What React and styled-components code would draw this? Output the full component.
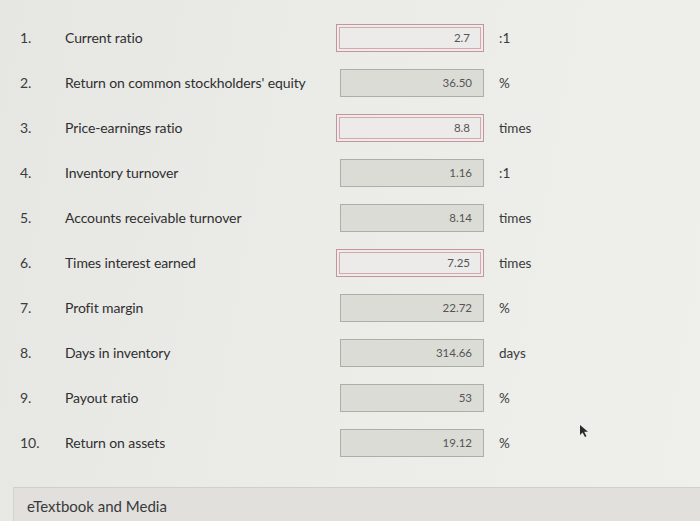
import React from 'react';
import styled, { createGlobalStyle } from 'styled-components';

const GlobalStyle = createGlobalStyle`
  html, body {
    margin: 0;
    padding: 0;
    background: #eaeae7;
    font-family: Lato, "Open Sans", sans-serif;
    color: #333;
  }
`;

const Page = styled.div`
  position: relative;
  width: 700px;
  height: 521px;
  overflow: hidden;
  background: linear-gradient(100deg, #e6e6e3 0%, #ebebe8 45%, #efefec 100%);
  display: flex;
  flex-direction: column;
`;

const List = styled.div`
  padding: 15px 0 0 20px;
  display: flex;
  flex-direction: column;
`;

const Row = styled.div`
  display: grid;
  grid-template-columns: 45px 271px 148px auto;
  align-items: center;
  height: 45px;
`;

const Num = styled.span`
  font-size: 14px;
  color: #3c3c3c;
`;

const Label = styled.span`
  font-size: 14px;
  color: #2f2f2f;
  letter-spacing: -0.1px;
`;

const Box = styled.div`
  box-sizing: border-box;
  height: 28px;
  display: flex;
  align-items: center;
  justify-content: flex-end;
  padding-right: 11px;
  font-size: 11.5px;
  color: #555;
  ${(p) =>
    p.$error
      ? `
    background: #ecebe9;
    border: 1px solid #c4959b;
    box-shadow: inset 0 0 0 2px #eeecea, inset 0 0 0 3px #d0aab0;
    padding-right: 13px;
  `
      : `
    background: #dcdcd7;
    border: 1px solid #aeaea9;
    margin-left: 4px;
  `}
`;

const Unit = styled.span`
  font-size: 13.5px;
  color: #3a3a3a;
  padding-left: 15px;
`;

const Footer = styled.div`
  margin: auto 0 0 13px;
  height: 31px;
  border-top: 1px solid #cfcfcb;
  border-left: 1px solid #d2d2ce;
  background: #e1e0dd;
  display: flex;
  align-items: center;
  padding-left: 13px;
  padding-top: 2px;
  font-size: 15px;
  color: #3a3a3a;
`;

const Cursor = styled.svg`
  position: absolute;
  left: 579px;
  top: 424px;
  width: 12px;
  height: 14px;
`;

const rows = [
  { n: '1.', label: 'Current ratio', value: '2.7', unit: ':1', error: true },
  { n: '2.', label: "Return on common stockholders' equity", value: '36.50', unit: '%' },
  { n: '3.', label: 'Price-earnings ratio', value: '8.8', unit: 'times', error: true },
  { n: '4.', label: 'Inventory turnover', value: '1.16', unit: ':1' },
  { n: '5.', label: 'Accounts receivable turnover', value: '8.14', unit: 'times' },
  { n: '6.', label: 'Times interest earned', value: '7.25', unit: 'times', error: true },
  { n: '7.', label: 'Profit margin', value: '22.72', unit: '%' },
  { n: '8.', label: 'Days in inventory', value: '314.66', unit: 'days' },
  { n: '9.', label: 'Payout ratio', value: '53', unit: '%' },
  { n: '10.', label: 'Return on assets', value: '19.12', unit: '%' },
];

export default function App() {
  return (
    <>
      <GlobalStyle />
      <Page>
        <List>
          {rows.map((r) => (
            <Row key={r.n}>
              <Num>{r.n}</Num>
              <Label>{r.label}</Label>
              <Box $error={r.error}>{r.value}</Box>
              <Unit>{r.unit}</Unit>
            </Row>
          ))}
        </List>
        <Footer>eTextbook and Media</Footer>
        <Cursor viewBox="0 0 12 14">
          <path d="M1 1 L1 11 L3.5 8.5 L6 13 L7.5 12.2 L5.2 7.8 L9 7.8 Z" fill="#2a2a2a" />
        </Cursor>
      </Page>
    </>
  );
}
